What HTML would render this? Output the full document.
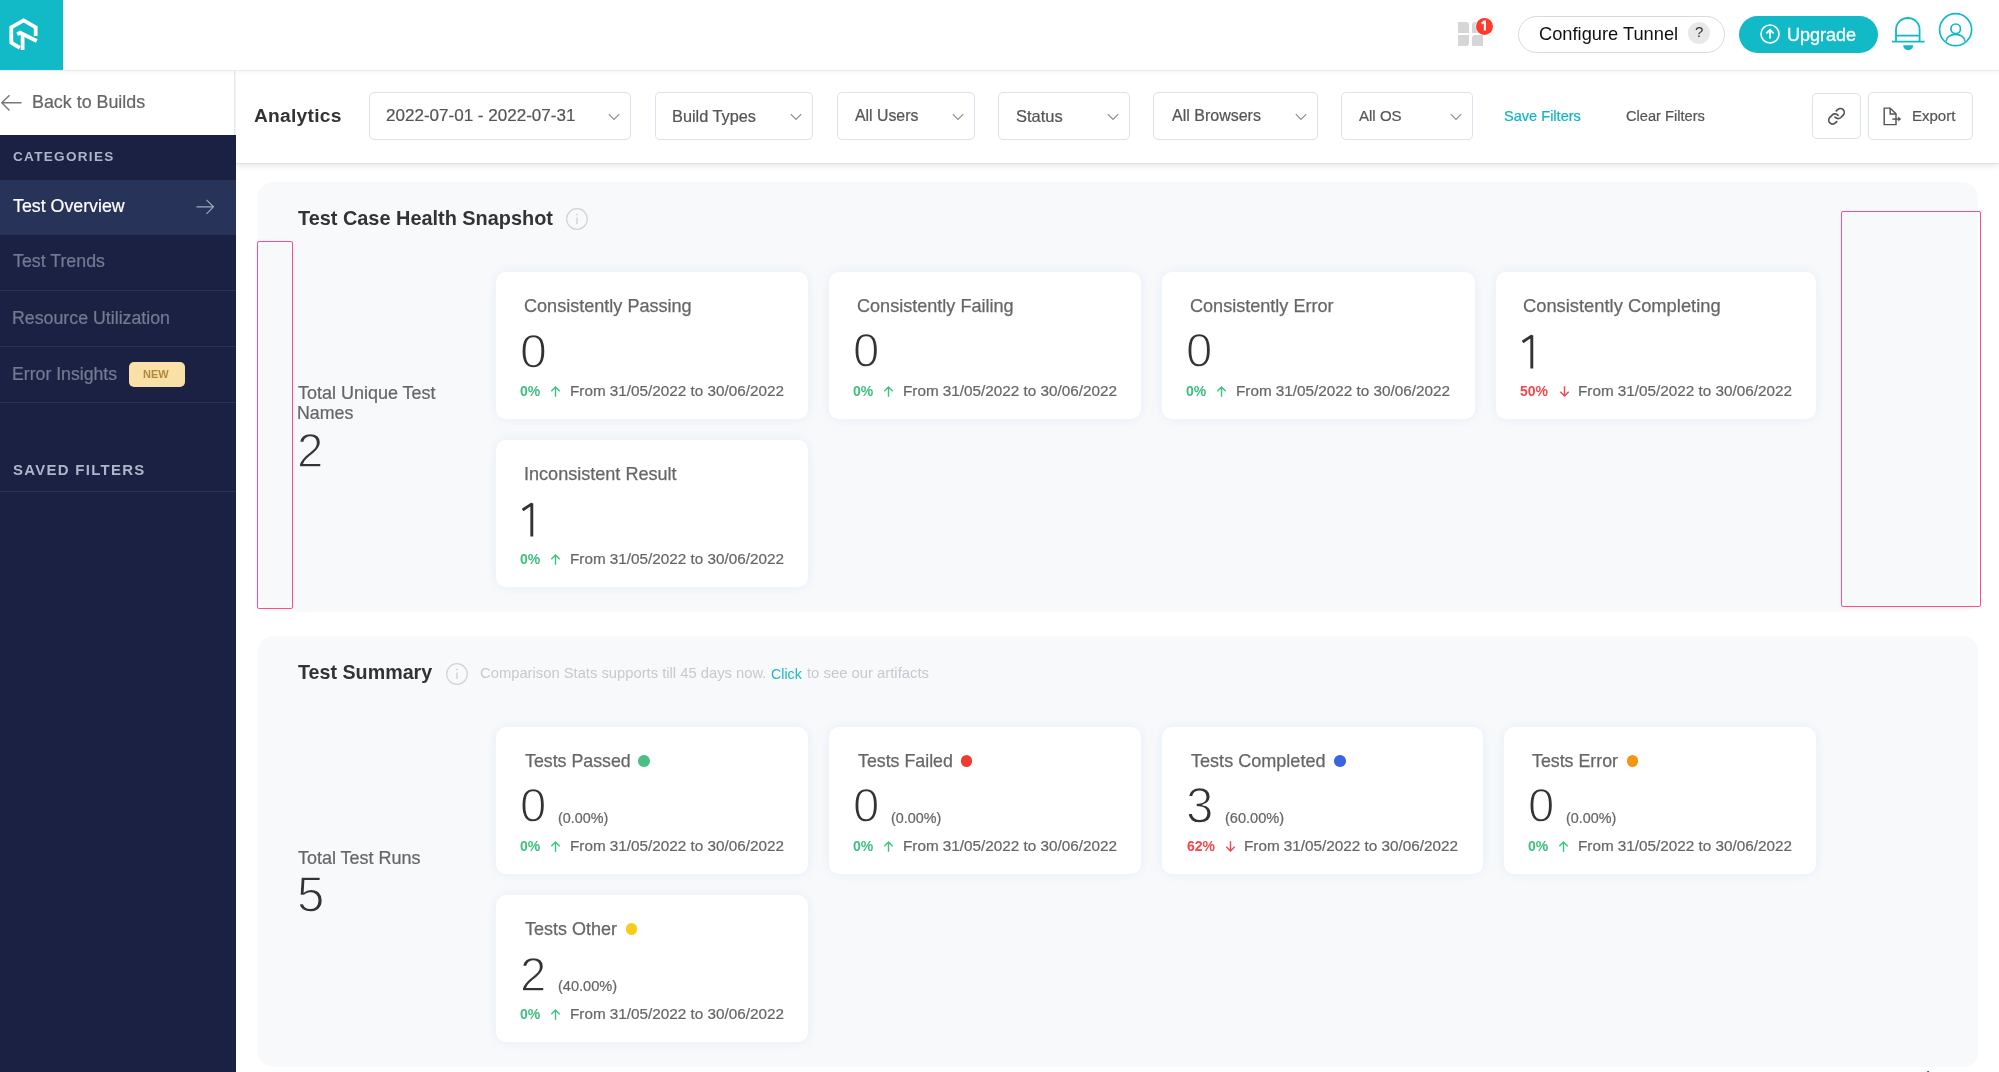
<!DOCTYPE html><html><head><meta charset="utf-8"><style>*{margin:0;padding:0;box-sizing:border-box}
html,body{width:1999px;height:1072px;overflow:hidden;background:#fff}
body{position:relative;font-family:"Liberation Sans",sans-serif}
body>div,body>svg{position:absolute}
.t{position:absolute;white-space:nowrap;z-index:10;will-change:transform}
</style></head><body>
<div style="left:0;top:0;width:1999px;height:70px;background:#fff;box-shadow:0 1px 0 #ebebeb,0 2px 5px rgba(0,0,0,.05);z-index:5"></div>
<div style="left:0;top:0;width:62.5px;height:70px;background:#12B9C6;z-index:6"></div>
<svg style="left:0;top:1px;z-index:7" width="62" height="70" viewBox="0 0 62 70">
<g fill="none" stroke="#fff" stroke-width="3.8" stroke-linejoin="miter">
<path d="M19.8 46.8 L11.3 41.6 L11.3 26.3 L23.6 19.4 L35.7 26.3 L35.7 35"/>
<path d="M17.2 33.3 L20.1 31.7 L36.8 40"/>
<path d="M22.6 33.6 L22.6 49"/>
</g></svg>
<div style="left:1458.4px;top:22.1px;width:11px;height:10.7px;background:#d6d6d6;border-radius:0 3px 0 0;z-index:6"></div>
<div style="left:1471.8px;top:22.1px;width:11px;height:10.7px;background:#d6d6d6;border-radius:3px 0 0 0;z-index:6"></div>
<div style="left:1458.4px;top:35px;width:11px;height:10.7px;background:#d6d6d6;border-radius:0 0 3px 0;z-index:6"></div>
<div style="left:1471.8px;top:35px;width:11px;height:10.7px;background:#d6d6d6;border-radius:3px 0 0 0;z-index:6"></div>
<div style="left:1475.5px;top:17.7px;width:17.2px;height:17.2px;border-radius:50%;background:#FC3A2E;box-shadow:0 0 0 0.6px #fff;z-index:7"></div>
<svg style="left:1478px;top:18px;z-index:8" width="12" height="16" viewBox="0 0 12 16"><path d="M6.9 2.6 V12.6 M6.9 3.2 L3.6 5.6" fill="none" stroke="#fff" stroke-width="2.1" stroke-linejoin="round"/></svg>
<div style="left:1518px;top:15.5px;width:207px;height:37px;border:1.5px solid #dadada;border-radius:20px;z-index:6;background:#fff"></div>
<div style="left:1688px;top:22px;width:22px;height:22px;border-radius:50%;background:#e8e8e8;z-index:7"></div>
<div style="left:1739px;top:16px;width:139px;height:36.5px;border-radius:19px;background:#12B9C6;z-index:6"></div>
<svg style="left:1758px;top:22px;z-index:7" width="24" height="24" viewBox="0 0 24 24"><circle cx="12" cy="12" r="9" fill="none" stroke="#fff" stroke-width="1.6"/><path d="M12 16.5 V8 M8.4 11.3 L12 7.8 L15.6 11.3" fill="none" stroke="#fff" stroke-width="1.8"/></svg>
<svg style="left:1888px;top:14px;z-index:7" width="40" height="40" viewBox="0 0 40 40"><g fill="none" stroke="#12B9C6" stroke-width="1.8"><path d="M8 27.6 V15.8 A11.8 11.8 0 0 1 31.6 15.8 V27.6"/><path d="M8 21.6 H31.6"/><path d="M4 27.6 H36.6"/></g><path d="M15.2 31.2 H25.2 A5 5 0 0 1 15.2 31.2 Z" fill="#12B9C6"/></svg>
<svg style="left:1937px;top:11px;z-index:7" width="38" height="38" viewBox="0 0 38 38"><g fill="none" stroke="#12B9C6" stroke-width="1.7"><circle cx="18.6" cy="18.7" r="16"/><circle cx="18.7" cy="17.8" r="4.8"/><path d="M9.1 30.6 A9.45 7.3 0 0 1 28 30.6"/></g></svg>
<div style="left:0;top:70px;width:235px;height:65px;background:#fff;border-right:1px solid #e6e8ec;z-index:2"></div>
<div style="left:0;top:135px;width:236px;height:937px;background:#1A2142;z-index:2"></div>
<div style="left:0;top:180px;width:236px;height:55px;background:#283359;z-index:3"></div>
<div style="left:0;top:290px;width:236px;height:1px;background:#2C3455;z-index:3"></div>
<div style="left:0;top:346px;width:236px;height:1px;background:#2C3455;z-index:3"></div>
<div style="left:0;top:402px;width:236px;height:1px;background:#2C3455;z-index:3"></div>
<div style="left:0;top:491px;width:236px;height:1px;background:#2C3455;z-index:3"></div>
<svg style="left:0;top:93px;z-index:4" width="24" height="20" viewBox="0 0 24 20"><path d="M21.5 9.8 H2.5 M9.5 2.2 L1.8 9.8 L9.5 17.4" fill="none" stroke="#777" stroke-width="1.4"/></svg>
<svg style="left:194px;top:197px;z-index:4" width="22" height="20" viewBox="0 0 22 20"><path d="M2.5 9.8 H19.5 M12.5 2.8 L19.5 9.8 L12.5 16.8" fill="none" stroke="#A0A7BD" stroke-width="1.15"/></svg>
<div style="left:128.5px;top:361.5px;width:56px;height:25px;border-radius:5px;background:#F9E0A6;z-index:4"></div>
<div style="left:236px;top:70px;width:1763px;height:93px;background:#fff;box-shadow:0 1px 1px rgba(0,0,0,.05),0 3px 6px rgba(0,0,0,.09);z-index:1"></div>
<div style="left:369px;top:92px;width:262px;height:48px;border:1px solid #DCE2EC;border-radius:5px;background:#fff;z-index:2"></div>
<svg style="left:607.5px;top:113px;z-index:3" width="12" height="8" viewBox="0 0 12 8"><path d="M0.8 1.2 L6 6.4 L11.2 1.2" fill="none" stroke="#8a8a8a" stroke-width="1.1"/></svg>
<div style="left:655px;top:92px;width:158px;height:48px;border:1px solid #DCE2EC;border-radius:5px;background:#fff;z-index:2"></div>
<svg style="left:789.5px;top:113px;z-index:3" width="12" height="8" viewBox="0 0 12 8"><path d="M0.8 1.2 L6 6.4 L11.2 1.2" fill="none" stroke="#8a8a8a" stroke-width="1.1"/></svg>
<div style="left:837px;top:92px;width:138px;height:48px;border:1px solid #DCE2EC;border-radius:5px;background:#fff;z-index:2"></div>
<svg style="left:951.5px;top:113px;z-index:3" width="12" height="8" viewBox="0 0 12 8"><path d="M0.8 1.2 L6 6.4 L11.2 1.2" fill="none" stroke="#8a8a8a" stroke-width="1.1"/></svg>
<div style="left:998px;top:92px;width:132px;height:48px;border:1px solid #DCE2EC;border-radius:5px;background:#fff;z-index:2"></div>
<svg style="left:1106.5px;top:113px;z-index:3" width="12" height="8" viewBox="0 0 12 8"><path d="M0.8 1.2 L6 6.4 L11.2 1.2" fill="none" stroke="#8a8a8a" stroke-width="1.1"/></svg>
<div style="left:1153px;top:92px;width:165px;height:48px;border:1px solid #DCE2EC;border-radius:5px;background:#fff;z-index:2"></div>
<svg style="left:1294.5px;top:113px;z-index:3" width="12" height="8" viewBox="0 0 12 8"><path d="M0.8 1.2 L6 6.4 L11.2 1.2" fill="none" stroke="#8a8a8a" stroke-width="1.1"/></svg>
<div style="left:1341px;top:92px;width:132px;height:48px;border:1px solid #DCE2EC;border-radius:5px;background:#fff;z-index:2"></div>
<svg style="left:1449.5px;top:113px;z-index:3" width="12" height="8" viewBox="0 0 12 8"><path d="M0.8 1.2 L6 6.4 L11.2 1.2" fill="none" stroke="#8a8a8a" stroke-width="1.1"/></svg>
<div style="left:1812px;top:93px;width:49px;height:46px;border:1px solid #DCE2EC;border-radius:5px;background:#fff;z-index:2"></div>
<svg style="left:1824px;top:104px;z-index:3" width="24" height="24" viewBox="0 0 24 24"><g transform="translate(12.5 12.3) scale(0.78) translate(-12 -12)" fill="none" stroke="#555" stroke-width="2.2" stroke-linecap="round" stroke-linejoin="round"><path d="M10 13a5 5 0 0 0 7.54.54l3-3a5 5 0 0 0-7.07-7.07l-1.72 1.71"/><path d="M14 11a5 5 0 0 0-7.54-.54l-3 3a5 5 0 0 0 7.07 7.07l1.71-1.71"/></g></svg>
<div style="left:1868px;top:92px;width:105px;height:47.5px;border:1px solid #DCE2EC;border-radius:5px;background:#fff;z-index:2"></div>
<svg style="left:1880px;top:104px;z-index:3" width="24" height="24" viewBox="0 0 24 24"><g fill="none" stroke="#555" stroke-width="1.45" stroke-linejoin="miter"><path d="M4.2 4.1 H10.2 L16 9.9 V20.6 H4.2 Z"/><path d="M10.2 4.1 V9.9 H16"/><path d="M12.3 15.1 H18.8"/></g><path d="M18.2 12.6 L21.2 15.1 L18.2 17.6 Z" fill="#555"/></svg>
<div style="left:258px;top:182px;width:1720px;height:430px;background:#F8F9FB;border-radius:15px;z-index:1"></div>
<div style="left:258px;top:636px;width:1720px;height:431px;background:#F8F9FB;border-radius:15px;z-index:1"></div>
<svg style="left:565px;top:207px;z-index:3" width="24" height="24" viewBox="0 0 24 24"><circle cx="12" cy="12" r="10.3" fill="none" stroke="#d0d3d8" stroke-width="1.2"/><path d="M12 10.5 V17" stroke="#c8cbd0" stroke-width="1.2"/><circle cx="12" cy="7.6" r="0.8" fill="#c8cbd0"/></svg>
<svg style="left:445px;top:661.5px;z-index:3" width="24" height="24" viewBox="0 0 24 24"><circle cx="12" cy="12" r="10.3" fill="none" stroke="#d0d3d8" stroke-width="1.2"/><path d="M12 10.5 V17" stroke="#c8cbd0" stroke-width="1.2"/><circle cx="12" cy="7.6" r="0.8" fill="#c8cbd0"/></svg>
<div style="left:256.6px;top:241px;width:36px;height:368px;border:1.8px solid #FF4E86;border-radius:2px;z-index:8"></div>
<div style="left:1841px;top:210.5px;width:140px;height:396.5px;border:1.8px solid #FF4E86;border-radius:2px;z-index:8"></div>
<div style="left:496px;top:272px;width:312px;height:147px;background:#fff;border-radius:10px;box-shadow:0 0 12px rgba(190,220,240,.34);z-index:2"></div>
<svg style="left:550px;top:386px;z-index:4" width="11" height="11" viewBox="0 0 11 11"><path d="M5.5 10.8 V1.2 M1.3 5.2 L5.5 1 L9.7 5.2" fill="none" stroke="#40BF82" stroke-width="1.4"/></svg>
<div style="left:829px;top:272px;width:312px;height:147px;background:#fff;border-radius:10px;box-shadow:0 0 12px rgba(190,220,240,.34);z-index:2"></div>
<svg style="left:883px;top:386px;z-index:4" width="11" height="11" viewBox="0 0 11 11"><path d="M5.5 10.8 V1.2 M1.3 5.2 L5.5 1 L9.7 5.2" fill="none" stroke="#40BF82" stroke-width="1.4"/></svg>
<div style="left:1162px;top:272px;width:313px;height:147px;background:#fff;border-radius:10px;box-shadow:0 0 12px rgba(190,220,240,.34);z-index:2"></div>
<svg style="left:1216px;top:386px;z-index:4" width="11" height="11" viewBox="0 0 11 11"><path d="M5.5 10.8 V1.2 M1.3 5.2 L5.5 1 L9.7 5.2" fill="none" stroke="#40BF82" stroke-width="1.4"/></svg>
<div style="left:1496px;top:272px;width:320px;height:147px;background:#fff;border-radius:10px;box-shadow:0 0 12px rgba(190,220,240,.34);z-index:2"></div>
<svg style="left:1519px;top:333.5px;z-index:4" width="18" height="36" viewBox="0 0 18 36"><path d="M12.8 1.3 V34.4 M13.2 1.6 L3.6 8" fill="none" stroke="#333" stroke-width="2.9" stroke-linejoin="round"/></svg>
<svg style="left:1559px;top:386px;z-index:4" width="11" height="11" viewBox="0 0 11 11"><path d="M5.5 0.2 V9.8 M1.3 5.8 L5.5 10 L9.7 5.8" fill="none" stroke="#F0484D" stroke-width="1.4"/></svg>
<div style="left:496px;top:440px;width:312px;height:147px;background:#fff;border-radius:10px;box-shadow:0 0 12px rgba(190,220,240,.34);z-index:2"></div>
<svg style="left:519px;top:501.5px;z-index:4" width="18" height="36" viewBox="0 0 18 36"><path d="M12.8 1.3 V34.4 M13.2 1.6 L3.6 8" fill="none" stroke="#333" stroke-width="2.9" stroke-linejoin="round"/></svg>
<svg style="left:550px;top:554px;z-index:4" width="11" height="11" viewBox="0 0 11 11"><path d="M5.5 10.8 V1.2 M1.3 5.2 L5.5 1 L9.7 5.2" fill="none" stroke="#40BF82" stroke-width="1.4"/></svg>
<div style="left:496px;top:727px;width:312px;height:147px;background:#fff;border-radius:10px;box-shadow:0 0 12px rgba(190,220,240,.34);z-index:2"></div>
<svg style="left:550px;top:841px;z-index:4" width="11" height="11" viewBox="0 0 11 11"><path d="M5.5 10.8 V1.2 M1.3 5.2 L5.5 1 L9.7 5.2" fill="none" stroke="#40BF82" stroke-width="1.4"/></svg>
<div style="left:638.4000000000001px;top:755.0px;width:11.6px;height:11.6px;border-radius:50%;background:#4CBF84;z-index:4"></div>
<div style="left:829px;top:727px;width:312px;height:147px;background:#fff;border-radius:10px;box-shadow:0 0 12px rgba(190,220,240,.34);z-index:2"></div>
<svg style="left:883px;top:841px;z-index:4" width="11" height="11" viewBox="0 0 11 11"><path d="M5.5 10.8 V1.2 M1.3 5.2 L5.5 1 L9.7 5.2" fill="none" stroke="#40BF82" stroke-width="1.4"/></svg>
<div style="left:960.9000000000001px;top:755.0px;width:11.6px;height:11.6px;border-radius:50%;background:#F03B2E;z-index:4"></div>
<div style="left:1162px;top:727px;width:321px;height:147px;background:#fff;border-radius:10px;box-shadow:0 0 12px rgba(190,220,240,.34);z-index:2"></div>
<svg style="left:1225px;top:841px;z-index:4" width="11" height="11" viewBox="0 0 11 11"><path d="M5.5 0.2 V9.8 M1.3 5.8 L5.5 10 L9.7 5.8" fill="none" stroke="#F0484D" stroke-width="1.4"/></svg>
<div style="left:1334.2px;top:755.0px;width:11.6px;height:11.6px;border-radius:50%;background:#3B64E0;z-index:4"></div>
<div style="left:1504px;top:727px;width:312px;height:147px;background:#fff;border-radius:10px;box-shadow:0 0 12px rgba(190,220,240,.34);z-index:2"></div>
<svg style="left:1558px;top:841px;z-index:4" width="11" height="11" viewBox="0 0 11 11"><path d="M5.5 10.8 V1.2 M1.3 5.2 L5.5 1 L9.7 5.2" fill="none" stroke="#40BF82" stroke-width="1.4"/></svg>
<div style="left:1626.9px;top:755.0px;width:11.6px;height:11.6px;border-radius:50%;background:#F5960F;z-index:4"></div>
<div style="left:496px;top:895px;width:312px;height:147px;background:#fff;border-radius:10px;box-shadow:0 0 12px rgba(190,220,240,.34);z-index:2"></div>
<svg style="left:550px;top:1009px;z-index:4" width="11" height="11" viewBox="0 0 11 11"><path d="M5.5 10.8 V1.2 M1.3 5.2 L5.5 1 L9.7 5.2" fill="none" stroke="#40BF82" stroke-width="1.4"/></svg>
<div style="left:625.8000000000001px;top:923.0px;width:11.6px;height:11.6px;border-radius:50%;background:#F8CC1B;z-index:4"></div>
<svg style="left:1922px;top:1066px;z-index:20" width="14" height="6" viewBox="0 0 14 6"><path d="M5 3.2 L10.5 8 L4.6 8 Z" fill="#222" stroke="#fff" stroke-width="1.1" stroke-linejoin="round"/></svg>
<div class="t" id="cfg" style="left:1539.30px;top:25.13px;font-size:18.27px;line-height:18.27px;font-weight:400;color:#111;">Configure Tunnel</div>
<div class="t" id="q" style="left:1694.50px;top:24.05px;font-size:15.00px;line-height:15.00px;font-weight:400;color:#333;">?</div>
<div class="t" id="upg" style="left:1787.00px;top:25.64px;font-size:18.02px;line-height:18.02px;font-weight:400;color:#fff;-webkit-text-stroke:0.3px #fff;">Upgrade</div>
<div class="t" id="back" style="left:32.00px;top:93.76px;font-size:17.86px;line-height:17.86px;font-weight:400;color:#666;-webkit-text-stroke-width:0.22px;">Back to Builds</div>
<div class="t" id="cat" style="left:13.00px;top:149.89px;font-size:13.56px;line-height:13.56px;font-weight:700;color:#AEB5CB;letter-spacing:1.3px;">CATEGORIES</div>
<div class="t" id="ov" style="left:13.40px;top:197.64px;font-size:17.79px;line-height:17.79px;font-weight:400;color:#fff;-webkit-text-stroke-width:0.22px;">Test Overview</div>
<div class="t" id="tr" style="left:13.00px;top:253.49px;font-size:17.79px;line-height:17.79px;font-weight:400;color:#737B93;-webkit-text-stroke-width:0.22px;">Test Trends</div>
<div class="t" id="ru" style="left:12.00px;top:309.89px;font-size:17.78px;line-height:17.78px;font-weight:400;color:#737B93;-webkit-text-stroke-width:0.22px;">Resource Utilization</div>
<div class="t" id="ei" style="left:12.00px;top:365.64px;font-size:17.68px;line-height:17.68px;font-weight:400;color:#737B93;-webkit-text-stroke-width:0.22px;">Error Insights</div>
<div class="t" id="new" style="left:143.00px;top:369.15px;font-size:11.00px;line-height:11.00px;font-weight:700;color:#B08940;">NEW</div>
<div class="t" id="sf" style="left:13.00px;top:462.51px;font-size:14.94px;line-height:14.94px;font-weight:700;color:#AEB5CB;letter-spacing:1.3px;">SAVED FILTERS</div>
<div class="t" id="an" style="left:254.00px;top:105.73px;font-size:19.21px;line-height:19.21px;font-weight:700;color:#333;letter-spacing:0.25px;">Analytics</div>
<div class="t" id="d1" style="left:386.00px;top:107.46px;font-size:17.04px;line-height:17.04px;font-weight:400;color:#555;-webkit-text-stroke-width:0.22px;">2022-07-01 - 2022-07-31</div>
<div class="t" id="d2" style="left:672.40px;top:107.77px;font-size:16.32px;line-height:16.32px;font-weight:400;color:#555;-webkit-text-stroke-width:0.22px;">Build Types</div>
<div class="t" id="d3" style="left:855.00px;top:108.47px;font-size:15.84px;line-height:15.84px;font-weight:400;color:#555;-webkit-text-stroke-width:0.22px;">All Users</div>
<div class="t" id="d4" style="left:1016.00px;top:107.69px;font-size:16.48px;line-height:16.48px;font-weight:400;color:#555;-webkit-text-stroke-width:0.22px;">Status</div>
<div class="t" id="d5" style="left:1171.70px;top:108.40px;font-size:16.00px;line-height:16.00px;font-weight:400;color:#555;-webkit-text-stroke-width:0.22px;">All Browsers</div>
<div class="t" id="d6" style="left:1359.00px;top:108.31px;font-size:15.04px;line-height:15.04px;font-weight:400;color:#555;-webkit-text-stroke-width:0.22px;">All OS</div>
<div class="t" id="save" style="left:1504.30px;top:109.25px;font-size:14.57px;line-height:14.57px;font-weight:400;color:#12B3C2;-webkit-text-stroke-width:0.22px;">Save Filters</div>
<div class="t" id="clear" style="left:1625.70px;top:109.22px;font-size:14.64px;line-height:14.64px;font-weight:400;color:#555;-webkit-text-stroke-width:0.22px;">Clear Filters</div>
<div class="t" id="exp" style="left:1912.00px;top:108.06px;font-size:15.02px;line-height:15.02px;font-weight:400;color:#555;-webkit-text-stroke-width:0.22px;">Export</div>
<div class="t" id="h1" style="left:298.00px;top:209.35px;font-size:19.90px;line-height:19.90px;font-weight:700;color:#333;">Test Case Health Snapshot</div>
<div class="t" id="h2" style="left:298.40px;top:663.32px;font-size:19.70px;line-height:19.70px;font-weight:700;color:#333;">Test Summary</div>
<div class="t" id="note1" style="left:480.00px;top:666.48px;font-size:14.77px;line-height:14.77px;font-weight:400;color:#C6C9CF;">Comparison Stats supports till 45 days now.</div>
<div class="t" id="note2" style="left:771.00px;top:666.67px;font-size:14.20px;line-height:14.20px;font-weight:400;color:#1EB6C4;">Click</div>
<div class="t" id="note3" style="left:806.90px;top:666.45px;font-size:14.84px;line-height:14.84px;font-weight:400;color:#C6C9CF;">to see our artifacts</div>
<div class="t" id="tu1" style="left:298.00px;top:383.51px;font-size:17.98px;line-height:17.98px;font-weight:400;color:#666;-webkit-text-stroke-width:0.22px;">Total Unique Test</div>
<div class="t" id="tu2" style="left:296.90px;top:405.24px;font-size:17.80px;line-height:17.80px;font-weight:400;color:#666;-webkit-text-stroke-width:0.22px;">Names</div>
<div class="t" id="tu3" style="left:297.30px;top:426.92px;font-size:47.35px;line-height:47.35px;font-weight:400;color:#333;-webkit-text-stroke:1.3px #F8F9FB;">2</div>
<div class="t" id="tr1" style="left:298.20px;top:848.71px;font-size:17.98px;line-height:17.98px;font-weight:400;color:#666;-webkit-text-stroke-width:0.22px;">Total Test Runs</div>
<div class="t" id="tr2" style="left:296.85px;top:869.63px;font-size:49.22px;line-height:49.22px;font-weight:400;color:#333;-webkit-text-stroke:1.3px #F8F9FB;">5</div>
<div class="t" id="c1t" style="left:523.60px;top:297.02px;font-size:18.07px;line-height:18.07px;font-weight:400;color:#666;-webkit-text-stroke:0.25px #666;">Consistently Passing</div>
<div class="t" id="c1n" style="left:519.90px;top:327.41px;font-size:48.33px;line-height:48.33px;font-weight:400;color:#333;-webkit-text-stroke:1.3px #fff;">0</div>
<div class="t" id="c1p" style="left:520.30px;top:383.75px;font-size:14.00px;line-height:14.00px;font-weight:700;color:#40BF82;">0%</div>
<div class="t" id="c1f" style="left:569.70px;top:383.21px;font-size:15.28px;line-height:15.28px;font-weight:400;color:#666;-webkit-text-stroke-width:0.22px;">From 31/05/2022 to 30/06/2022</div>
<div class="t" id="c2t" style="left:856.60px;top:297.02px;font-size:18.07px;line-height:18.07px;font-weight:400;color:#666;-webkit-text-stroke:0.25px #666;">Consistently Failing</div>
<div class="t" id="c2n" style="left:852.80px;top:327.37px;font-size:47.38px;line-height:47.38px;font-weight:400;color:#333;-webkit-text-stroke:1.3px #fff;">0</div>
<div class="t" id="c2p" style="left:853.30px;top:383.75px;font-size:14.00px;line-height:14.00px;font-weight:700;color:#40BF82;">0%</div>
<div class="t" id="c2f" style="left:902.70px;top:383.21px;font-size:15.28px;line-height:15.28px;font-weight:400;color:#666;-webkit-text-stroke-width:0.22px;">From 31/05/2022 to 30/06/2022</div>
<div class="t" id="c3t" style="left:1189.60px;top:297.02px;font-size:18.07px;line-height:18.07px;font-weight:400;color:#666;-webkit-text-stroke:0.25px #666;">Consistently Error</div>
<div class="t" id="c3n" style="left:1185.80px;top:327.37px;font-size:47.38px;line-height:47.38px;font-weight:400;color:#333;-webkit-text-stroke:1.3px #fff;">0</div>
<div class="t" id="c3p" style="left:1186.30px;top:383.75px;font-size:14.00px;line-height:14.00px;font-weight:700;color:#40BF82;">0%</div>
<div class="t" id="c3f" style="left:1235.70px;top:383.21px;font-size:15.28px;line-height:15.28px;font-weight:400;color:#666;-webkit-text-stroke-width:0.22px;">From 31/05/2022 to 30/06/2022</div>
<div class="t" id="c4t" style="left:1523.00px;top:296.91px;font-size:18.33px;line-height:18.33px;font-weight:400;color:#666;-webkit-text-stroke:0.25px #666;">Consistently Completing</div>
<div class="t" id="c4p" style="left:1519.60px;top:383.75px;font-size:14.00px;line-height:14.00px;font-weight:700;color:#F0484D;">50%</div>
<div class="t" id="c4f" style="left:1577.60px;top:383.21px;font-size:15.28px;line-height:15.28px;font-weight:400;color:#666;-webkit-text-stroke-width:0.22px;">From 31/05/2022 to 30/06/2022</div>
<div class="t" id="c5t" style="left:523.60px;top:465.02px;font-size:18.07px;line-height:18.07px;font-weight:400;color:#666;-webkit-text-stroke:0.25px #666;">Inconsistent Result</div>
<div class="t" id="c5p" style="left:520.30px;top:551.75px;font-size:14.00px;line-height:14.00px;font-weight:700;color:#40BF82;">0%</div>
<div class="t" id="c5f" style="left:569.70px;top:551.21px;font-size:15.28px;line-height:15.28px;font-weight:400;color:#666;-webkit-text-stroke-width:0.22px;">From 31/05/2022 to 30/06/2022</div>
<div class="t" id="p1t" style="left:524.60px;top:752.78px;font-size:17.80px;line-height:17.80px;font-weight:400;color:#666;-webkit-text-stroke:0.25px #666;">Tests Passed</div>
<div class="t" id="p1n" style="left:519.90px;top:782.47px;font-size:47.38px;line-height:47.38px;font-weight:400;color:#333;-webkit-text-stroke:1.3px #fff;">0</div>
<div class="t" id="p1s" style="left:558.10px;top:810.76px;font-size:14.34px;line-height:14.34px;font-weight:400;color:#666;-webkit-text-stroke-width:0.22px;">(0.00%)</div>
<div class="t" id="p1p" style="left:520.30px;top:838.75px;font-size:14.00px;line-height:14.00px;font-weight:700;color:#40BF82;">0%</div>
<div class="t" id="p1f" style="left:569.70px;top:838.21px;font-size:15.28px;line-height:15.28px;font-weight:400;color:#666;-webkit-text-stroke-width:0.22px;">From 31/05/2022 to 30/06/2022</div>
<div class="t" id="p2t" style="left:858.30px;top:752.88px;font-size:17.80px;line-height:17.80px;font-weight:400;color:#666;-webkit-text-stroke:0.25px #666;">Tests Failed</div>
<div class="t" id="p2n" style="left:852.90px;top:782.47px;font-size:47.38px;line-height:47.38px;font-weight:400;color:#333;-webkit-text-stroke:1.3px #fff;">0</div>
<div class="t" id="p2s" style="left:891.10px;top:810.76px;font-size:14.34px;line-height:14.34px;font-weight:400;color:#666;-webkit-text-stroke-width:0.22px;">(0.00%)</div>
<div class="t" id="p2p" style="left:853.30px;top:838.75px;font-size:14.00px;line-height:14.00px;font-weight:700;color:#40BF82;">0%</div>
<div class="t" id="p2f" style="left:902.70px;top:838.21px;font-size:15.28px;line-height:15.28px;font-weight:400;color:#666;-webkit-text-stroke-width:0.22px;">From 31/05/2022 to 30/06/2022</div>
<div class="t" id="p3t" style="left:1191.00px;top:752.17px;font-size:18.07px;line-height:18.07px;font-weight:400;color:#666;-webkit-text-stroke:0.25px #666;">Tests Completed</div>
<div class="t" id="p3n" style="left:1186.30px;top:781.08px;font-size:49.22px;line-height:49.22px;font-weight:400;color:#333;-webkit-text-stroke:1.3px #fff;">3</div>
<div class="t" id="p3s" style="left:1225.00px;top:810.67px;font-size:14.55px;line-height:14.55px;font-weight:400;color:#666;-webkit-text-stroke-width:0.22px;">(60.00%)</div>
<div class="t" id="p3p" style="left:1186.60px;top:838.75px;font-size:14.00px;line-height:14.00px;font-weight:700;color:#F0484D;">62%</div>
<div class="t" id="p3f" style="left:1244.00px;top:838.21px;font-size:15.28px;line-height:15.28px;font-weight:400;color:#666;-webkit-text-stroke-width:0.22px;">From 31/05/2022 to 30/06/2022</div>
<div class="t" id="p4t" style="left:1532.40px;top:752.78px;font-size:17.80px;line-height:17.80px;font-weight:400;color:#666;-webkit-text-stroke:0.25px #666;">Tests Error</div>
<div class="t" id="p4n" style="left:1527.90px;top:782.47px;font-size:47.38px;line-height:47.38px;font-weight:400;color:#333;-webkit-text-stroke:1.3px #fff;">0</div>
<div class="t" id="p4s" style="left:1566.10px;top:810.76px;font-size:14.34px;line-height:14.34px;font-weight:400;color:#666;-webkit-text-stroke-width:0.22px;">(0.00%)</div>
<div class="t" id="p4p" style="left:1528.30px;top:838.75px;font-size:14.00px;line-height:14.00px;font-weight:700;color:#40BF82;">0%</div>
<div class="t" id="p4f" style="left:1577.70px;top:838.21px;font-size:15.28px;line-height:15.28px;font-weight:400;color:#666;-webkit-text-stroke-width:0.22px;">From 31/05/2022 to 30/06/2022</div>
<div class="t" id="p5t" style="left:525.00px;top:920.21px;font-size:17.98px;line-height:17.98px;font-weight:400;color:#666;-webkit-text-stroke:0.25px #666;">Tests Other</div>
<div class="t" id="p5n" style="left:520.05px;top:950.92px;font-size:47.35px;line-height:47.35px;font-weight:400;color:#333;-webkit-text-stroke:1.3px #fff;">2</div>
<div class="t" id="p5s" style="left:558.20px;top:978.77px;font-size:14.55px;line-height:14.55px;font-weight:400;color:#666;-webkit-text-stroke-width:0.22px;">(40.00%)</div>
<div class="t" id="p5p" style="left:520.30px;top:1006.75px;font-size:14.00px;line-height:14.00px;font-weight:700;color:#40BF82;">0%</div>
<div class="t" id="p5f" style="left:569.70px;top:1006.21px;font-size:15.28px;line-height:15.28px;font-weight:400;color:#666;-webkit-text-stroke-width:0.22px;">From 31/05/2022 to 30/06/2022</div>
</body></html>
